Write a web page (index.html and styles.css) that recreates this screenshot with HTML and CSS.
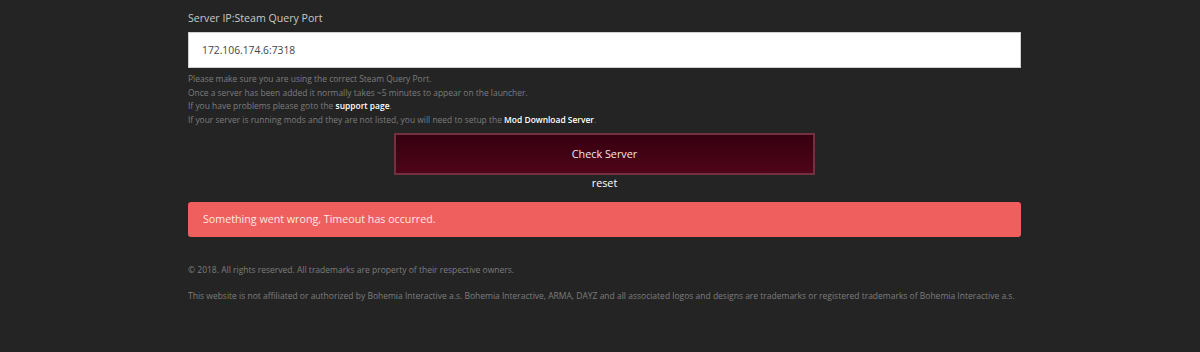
FILE: index.html
```html
<!DOCTYPE html>
<html lang="en">
<head>
    <meta charset="UTF-8">
    <title>Add Server</title>
    <link rel="stylesheet" href="styles.css">
</head>
<body>

    <div class="wrap">
        <form class="add-server">
            <label class="field-label" for="ip">Server IP:Steam Query Port</label>
            <input class="field" id="ip" type="text" value="172.106.174.6:7318">
            <div class="help">
                <p>Please make sure you are using the correct Steam Query Port.</p>
                <p>Once a server has been added it normally takes ~5 minutes to appear on the launcher.</p>
                <p>If you have problems please goto the <a href="#">support page</a>.</p>
                <p>If your server is running mods and they are not listed, you will need to setup the <a href="#">Mod Download Server</a>.</p>
            </div>
            <div class="actions">
                <button class="btn-check" type="button">Check Server</button>
                <a class="reset" href="#">reset</a>
            </div>
            <div class="alert">Something went wrong, Timeout has occurred.</div>
        </form>

        <footer>
            <p>&copy; 2018. All rights reserved. All trademarks are property of their respective owners.</p>
            <p>This website is not affiliated or authorized by Bohemia Interactive a.s. Bohemia Interactive, ARMA, DAYZ and all associated logos and designs are trademarks or registered trademarks of Bohemia Interactive a.s.</p>
        </footer>
    </div>

</body>
</html>
```

FILE: styles.css
```css
html,body,div,p,form,footer{
    margin: 0;
    padding: 0;
}

body{
    background-color: #242424;
    font-family: "Open Sans", "Noto Sans", sans-serif;
    color: #fff;
}

.wrap{
    width: 833px;
    margin-left: 188px;
    padding-top: 10px;
}

.field-label{
    display: block;
    font-size: 10.6px;
    color: #c8c8c8;
    line-height: 16px;
}

.field{
    display: block;
    box-sizing: border-box;
    width: 100%;
    height: 36px;
    margin-top: 6px;
    padding: 0 13px;
    border: 1px solid #cfcfcf;
    background-color: #fff;
    font-family: inherit;
    font-size: 10.3px;
    color: #444;
    outline: none;
}

.help{
    margin-top: 4px;
    font-size: 8.45px;
    line-height: 13.7px;
    color: #7d7d7d;
}

.help a{
    color: #fff;
    font-weight: 600;
    text-decoration: none;
}

.actions{
    display: flex;
    flex-direction: column;
    align-items: center;
    margin-top: 6px;
}

.btn-check{
    box-sizing: border-box;
    width: 421px;
    height: 42px;
    border: 2px solid #73303f;
    background: linear-gradient(#360010, #4f0419);
    font-family: inherit;
    font-size: 10.8px;
    color: #f2e6ea;
    cursor: pointer;
}

.reset{
    font-size: 10.8px;
    line-height: 16px;
    color: #fff;
    text-decoration: none;
}

.alert{
    box-sizing: border-box;
    height: 35px;
    margin-top: 11px;
    padding: 0 15px;
    border-radius: 3px;
    background-color: #ef5f5d;
    font-size: 10.7px;
    line-height: 35px;
    color: #fbe7e6;
}

footer{
    padding-top: 26px;
    font-size: 8.5px;
    color: #7d7d7d;
}

footer p{
    line-height: 13px;
    margin-bottom: 13px;
}
```
